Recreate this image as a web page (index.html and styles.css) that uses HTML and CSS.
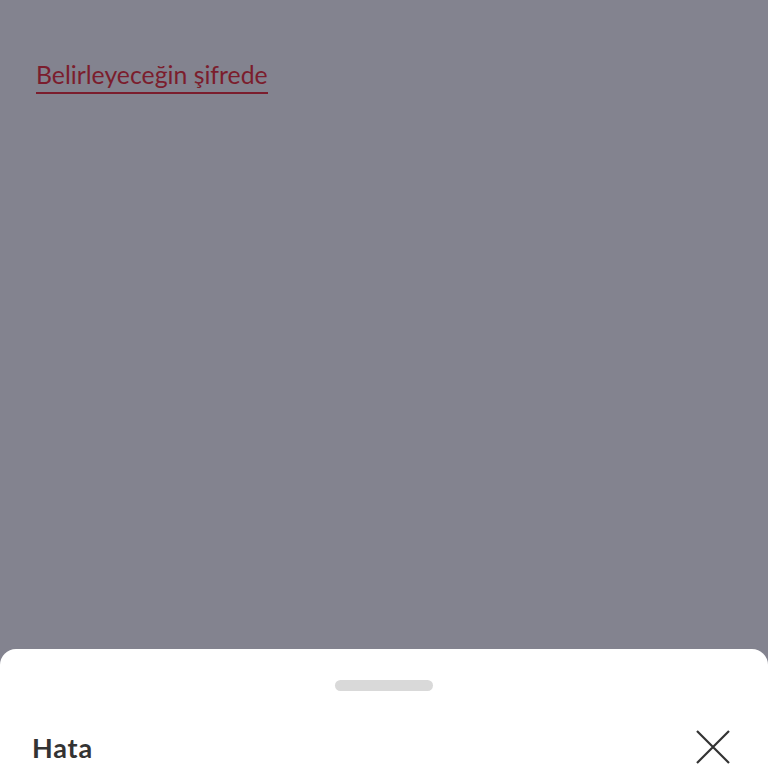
FILE: index.html
```html
<!DOCTYPE html>
<html lang="tr">
<head>
    <meta charset="UTF-8">
    <meta name="viewport" content="width=device-width, initial-scale=1.0">
    <title>Hata</title>
    <link rel="stylesheet" href="styles.css">
</head>
<body>
    <div class="page">
        <div class="content">
            <a class="link" href="#">Belirleyeceğin şifrede</a>
        </div>

        <div class="sheet">
            <div class="handle"></div>
            <div class="sheet-header">
                <h2 class="sheet-title">Hata</h2>
                <button class="close" aria-label="Kapat">
                    <svg width="34" height="34" viewBox="0 0 34 34">
                        <path d="M1 1 L33 33 M33 1 L1 33" stroke="#333" stroke-width="2.2" fill="none"/>
                    </svg>
                </button>
            </div>
        </div>
    </div>
</body>
</html>
```

FILE: styles.css
```css
body {
    margin: 0;
    padding: 0;
    font-family: Lato, 'Open Sans', sans-serif;
    background: #83838f;
}

.page {
    display: flex;
    flex-direction: column;
    height: 100vh;
    overflow: hidden;
}

.content {
    flex: 1;
    padding: 60px 36px 0;
}

.link {
    display: inline-block;
    color: #7b1d2d;
    font-size: 24.8px;
    text-decoration: none;
    border-bottom: 2px solid #7b1d2d;
    line-height: 30px;
    padding-bottom: 2px;
}

.sheet {
    background: white;
    border-radius: 16px 16px 0 0;
    height: 119px;
    padding: 0 32px;
    box-sizing: border-box;
}

.handle {
    width: 98px;
    height: 11px;
    background: #d9d9d9;
    border-radius: 6px;
    margin: 31px auto 0;
}

.sheet-header {
    display: flex;
    justify-content: space-between;
    align-items: center;
    margin-top: 39px;
}

.sheet-title {
    margin: 0;
    font-size: 27px;
    letter-spacing: 0.8px;
    font-weight: bold;
    color: #333;
}

.close {
    background: none;
    border: none;
    padding: 0;
    margin-right: 6px;
    display: flex;
    cursor: pointer;
}
```
